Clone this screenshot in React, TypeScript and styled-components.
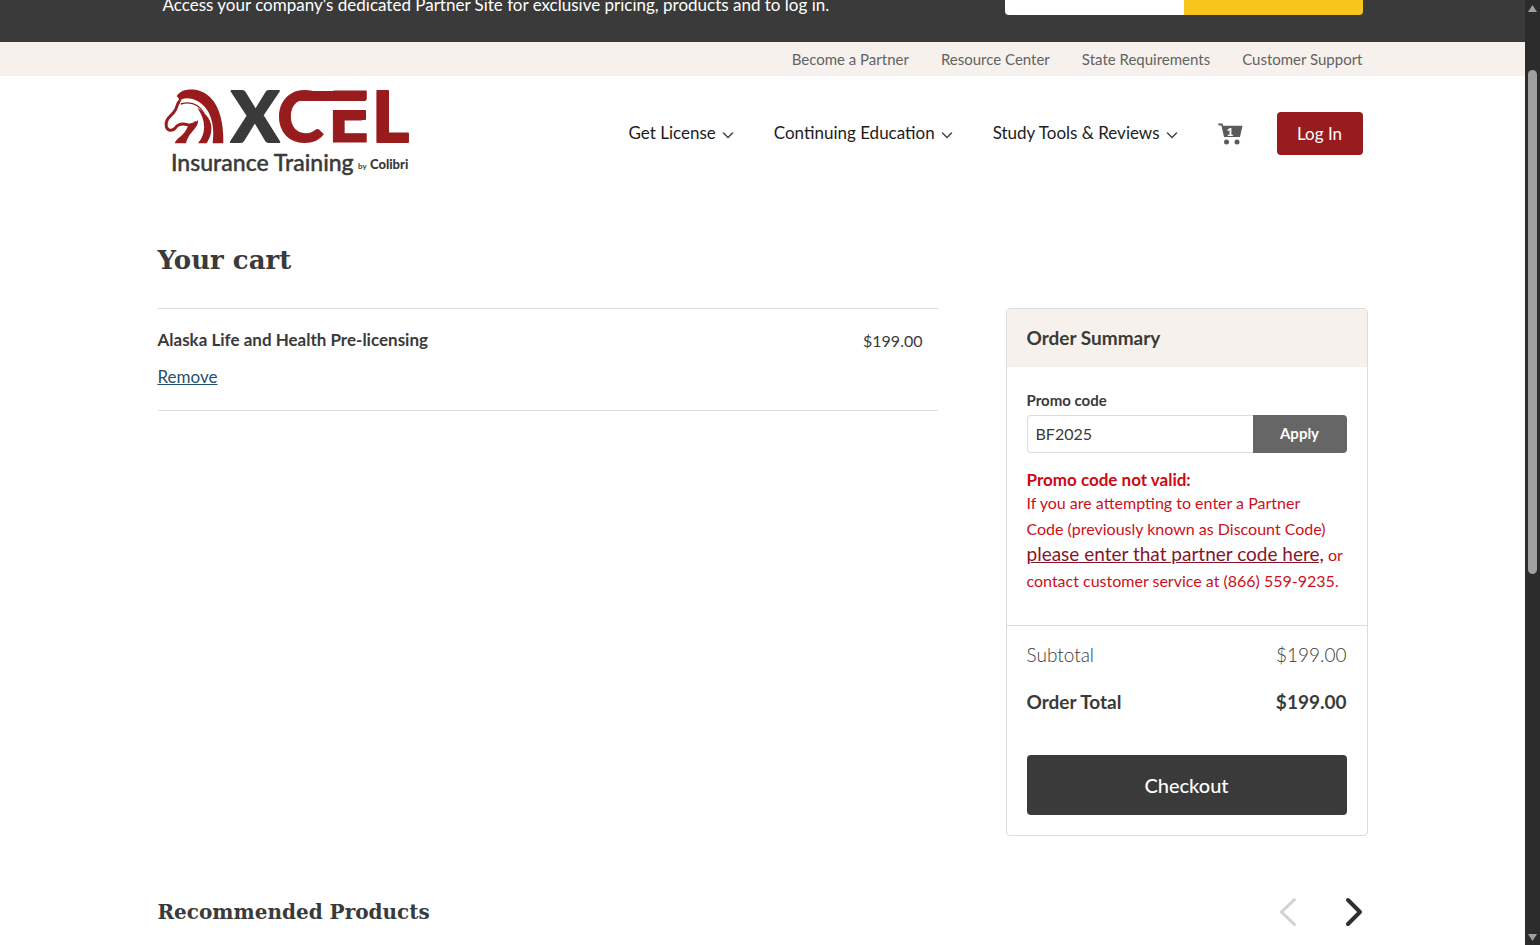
import React from "react";
import styled, { createGlobalStyle } from "styled-components";

const INK = "#3a3a3a";
const RED = "#981b1e";
const SAND = "#f6f1ec";
const LINE = "#dcdcdc";

const GlobalStyle = createGlobalStyle`
  * { box-sizing: border-box; }
  body {
    margin: 0;
    background: #fff;
    color: ${INK};
    font-family: Lato, "Liberation Sans", sans-serif;
    font-size: 16px;
    line-height: 24px;
  }
  h1, h2, h3, p, ul, dl, dd { margin: 0; padding: 0; }
  ul { list-style: none; }
  button, input { font-family: inherit; }
  button { cursor: pointer; border: 0; padding: 0; }
`;

const Shell = styled.div`
  display: flex;
  height: 100vh;
  overflow: hidden;
`;

const Page = styled.div`
  flex: 1;
  min-width: 0;
  overflow: hidden;
`;

const Wrap = styled.div<{ $width: number }>`
  width: 100%;
  max-width: ${(p) => p.$width}px;
  margin: 0 auto;
`;

const Banner = styled.section`
  height: 42px;
  overflow: hidden;
  background: ${INK};
  color: #fff;
`;

const BannerRow = styled(Wrap)`
  display: flex;
  height: 100%;
  justify-content: space-between;
  align-items: flex-end;
`;

const BannerText = styled.p`
  font-size: 17px;
  line-height: 26px;
  padding-bottom: 24px;
`;

const PartnerForm = styled.form`
  display: flex;
  width: 358px;
  padding-bottom: 27px;
`;

const PartnerInput = styled.input`
  flex: 1;
  min-width: 0;
  height: 48px;
  padding: 0;
  border: 0;
  border-radius: 4px 0 0 4px;
  background: #fff;
`;

const PartnerButton = styled.button`
  flex: 1;
  height: 48px;
  border-radius: 0 4px 4px 0;
  background: #f8c51c;
`;

const Utility = styled.nav`
  background: ${SAND};
  ul {
    display: flex;
    justify-content: flex-end;
    gap: 32px;
  }
`;

const UtilityLink = styled.a`
  display: block;
  color: #636363;
  font-size: 15px;
  line-height: 34px;
  text-decoration: none;
`;

const Header = styled.header`
  padding: 12px 0 10px;
`;

const HeaderRow = styled(Wrap)`
  display: flex;
  align-items: center;
  justify-content: space-between;
`;

const LogoLink = styled.a`
  display: block;
  svg {
    display: block;
    overflow: visible;
  }
`;

const MainNav = styled.nav`
  display: flex;
  align-items: center;
`;

const NavButton = styled.button`
  display: flex;
  align-items: center;
  gap: 6px;
  margin-right: 40px;
  background: none;
  color: #1c1c1c;
  font-size: 17px;
  line-height: 24px;
  svg { margin-top: 4px; }
`;

const CartLink = styled.a`
  display: block;
  margin-right: 34px;
  padding-top: 2px;
  svg { display: block; }
`;

const LoginButton = styled.button`
  height: 43px;
  width: 86px;
  border-radius: 4px;
  background: ${RED};
  color: #fff;
  font-size: 17px;
`;

const Title = styled.h1`
  padding: 56px 0 32px;
  font-family: "DejaVu Serif", "Liberation Serif", serif;
  font-size: 26px;
  line-height: 32px;
`;

const Columns = styled.div`
  display: grid;
  grid-template-columns: minmax(0, 1fr) 362px;
  gap: 68px;
  align-items: start;
`;

const CartItem = styled.li`
  display: flex;
  justify-content: space-between;
  padding: 19px 15px 21px 0;
  border-top: 1px solid ${LINE};
  border-bottom: 1px solid ${LINE};
`;

const ItemName = styled.h3`
  font-size: 17px;
  line-height: 24px;
  margin-bottom: 13px;
`;

const Remove = styled.a`
  display: block;
  color: #24506a;
  font-size: 17px;
  line-height: 24px;
  text-decoration: underline;
`;

const Price = styled.span`
  font-size: 16px;
  line-height: 25px;
`;

const Summary = styled.section`
  border: 1px solid ${LINE};
  border-radius: 4px;
`;

const SummaryTitle = styled.h2`
  padding: 17px 20px;
  background: ${SAND};
  font-size: 19px;
  line-height: 24px;
`;

const Promo = styled.form`
  padding: 23px 20px 31px;
  border-bottom: 1px solid ${LINE};
`;

const PromoLabel = styled.label`
  display: block;
  font-size: 15px;
  font-weight: 700;
  line-height: 20px;
`;

const PromoRow = styled.div`
  display: flex;
  margin: 5px 0 17px;
`;

const PromoInput = styled.input`
  flex: 1;
  min-width: 0;
  height: 38px;
  padding: 0 8px 2px;
  border: 1px solid ${LINE};
  border-right: 0;
  border-radius: 4px 0 0 4px;
  color: ${INK};
  font-size: 16px;
`;

const ApplyButton = styled.button`
  width: 94px;
  padding-bottom: 2px;
  border-radius: 0 4px 4px 0;
  background: #666;
  color: #fff;
  font-size: 15px;
  font-weight: 700;
`;

const ErrorTitle = styled.strong`
  display: block;
  color: #cc0a14;
  font-size: 17px;
  line-height: 20px;
`;

const ErrorText = styled.p`
  color: #cc1020;
  font-size: 16px;
  line-height: 26px;
  a {
    color: #86142a;
    font-size: 19px;
    line-height: 24px;
  }
`;

const Totals = styled.dl`
  display: grid;
  gap: 23px;
  padding: 17px 20px 41px;
`;

const TotalLine = styled.div<{ $strong?: boolean }>`
  display: flex;
  justify-content: space-between;
  font-size: 19px;
  line-height: 24px;
  font-weight: ${(p) => (p.$strong ? 700 : 300)};
`;

const Checkout = styled.button`
  display: block;
  width: calc(100% - 40px);
  height: 60px;
  margin: 0 20px 20px;
  border-radius: 4px;
  background: ${INK};
  color: #fff;
  font-size: 20px;
  font-weight: 500;
`;

const Recommended = styled.div`
  display: flex;
  align-items: center;
  justify-content: space-between;
  padding: 60px 5px 0 0;
  h2 {
    font-family: "DejaVu Serif", "Liberation Serif", serif;
    font-size: 20px;
    line-height: 32px;
  }
`;

const Arrows = styled.div`
  display: flex;
  gap: 48px;
`;

const ArrowButton = styled.button`
  background: none;
  svg { display: block; }
`;

const ScrollTrack = styled.div`
  display: flex;
  flex-direction: column;
  align-items: center;
  width: 15px;
  padding: 5px 0 4px;
  background: #2c2c2c;
`;

const ScrollSpace = styled.div<{ $grow: number }>`
  flex: ${(p) => p.$grow} 1 0;
`;

const ScrollThumb = styled.div`
  flex: 503 1 0;
  width: 9px;
  border-radius: 5px;
  background: #9f9f9f;
`;

const Logo = () => (
  <svg width="248" height="90" viewBox="0 0 248 90" role="img" aria-label="XCEL Insurance Training by Colibri">
    <g transform="translate(-3 -4) scale(0.3333)" fill={RED}>
      <path d="M50 37 C62 15 95 13 120 21 C165 36 192 90 190 178 L158 178 C166 120 150 62 100 46 C82 40 68 42 58 50 C56 43 54 39 50 37 Z" />
      <path d="M112 72 C160 100 164 140 140 178 L114 178 C140 148 138 108 112 72 Z" />
      <path d="M114 108 C116 134 88 140 78 178 L44 178 C50 160 74 156 84 126 C96 126 106 118 114 108 Z" />
      <path d="M62 48 C48 60 54 70 42 84 C30 98 14 108 19 128 C24 142 38 142 46 132 C54 120 66 118 82 122 C92 124 102 122 110 114" fill="none" stroke={RED} strokeWidth="9" strokeLinejoin="round" />
      <path d="M60 55 C88 46 118 52 134 84" fill="none" stroke="#fff" strokeWidth="4" />
      <path d="M62 60 C90 52 116 60 132 88" fill="none" stroke={RED} strokeWidth="4" />
    </g>
    <g fontFamily="Lato, sans-serif" fontWeight="900" fontSize="71" fill={RED} stroke={RED} strokeLinejoin="round">
      <text x="68" y="54" fill={INK} stroke={INK} strokeWidth="2">X</text>
      <text x="114" y="54">C</text>
      <text x="165" y="54">E</text>
      <text x="209" y="54" strokeWidth="2">L</text>
    </g>
    <rect x="141" y="12" width="64" height="10" fill="#fff" />
    <rect x="136" y="3" width="67" height="10" rx="1" fill={RED} />
    <rect x="170" y="22" width="33" height="10" rx="1" fill={RED} />
    <g fontFamily="Lato, sans-serif" fill={INK}>
      <text x="8" y="83" fontSize="23" fontWeight="500" stroke={INK} strokeWidth="0.4">Insurance Training</text>
      <text x="195" y="81" fontSize="8" fontWeight="700">by</text>
      <text x="207" y="81" fontSize="13" fontWeight="900">Colibri</text>
    </g>
  </svg>
);

const Chevron = () => (
  <svg width="12" height="8" viewBox="0 0 12 8" fill="none" stroke="#444" strokeWidth="1.5" strokeLinecap="round">
    <path d="M1.500 2 L6 6.500 L10.500 2" />
  </svg>
);

const CartIcon = () => (
  <svg width="25" height="22" viewBox="0 0 25 22">
    <path d="M0 0.500 H4.500 L5.200 2.800 H24.500 L22 14 H6 L3.400 2.500 H0.800 Z" fill="#5b5b5b" />
    <circle cx="8.500" cy="19" r="2.500" fill="#5b5b5b" />
    <circle cx="19" cy="19" r="2.500" fill="#5b5b5b" />
    <text x="12" y="13" textAnchor="middle" fill="#fff" fontFamily="Lato, sans-serif" fontSize="12" fontWeight="900">1</text>
  </svg>
);

const Arrow = ({ back }: { back?: boolean }) => (
  <svg width="18" height="30" viewBox="0 0 18 30" fill="none" stroke={back ? "#d2d2d2" : "#2f2f2f"} strokeWidth={back ? 3 : 4} strokeLinecap="round" strokeLinejoin="round">
    <path d={back ? "M15.500 2.500 L2.500 15 L15.500 27.500" : "M3 3 L15 15 L3 27"} />
  </svg>
);

const utilityLinks = ["Become a Partner", "Resource Center", "State Requirements", "Customer Support"];
const menus = ["Get License", "Continuing Education", "Study Tools & Reviews"];

export default function App() {
  return (
    <Shell>
      <GlobalStyle />
      <Page>
        <Banner>
          <BannerRow $width={1200}>
            <BannerText>Access your company's dedicated Partner Site for exclusive pricing, products and to log in.</BannerText>
            <PartnerForm onSubmit={(e) => e.preventDefault()}>
              <PartnerInput aria-label="Partner code" />
              <PartnerButton type="submit" aria-label="Go to partner site" />
            </PartnerForm>
          </BannerRow>
        </Banner>
        <Utility aria-label="Utility">
          <Wrap as="ul" $width={1200}>
            {utilityLinks.map((t) => (
              <li key={t}><UtilityLink href="#">{t}</UtilityLink></li>
            ))}
          </Wrap>
        </Utility>
        <Header>
          <HeaderRow $width={1200}>
            <LogoLink href="#"><Logo /></LogoLink>
            <MainNav aria-label="Main">
              {menus.map((t) => (
                <NavButton type="button" key={t}>{t}<Chevron /></NavButton>
              ))}
              <CartLink href="#" aria-label="Cart"><CartIcon /></CartLink>
              <LoginButton type="button">Log In</LoginButton>
            </MainNav>
          </HeaderRow>
        </Header>
        <Wrap as="main" $width={1210}>
          <Title>Your cart</Title>
          <Columns>
            <ul>
              <CartItem>
                <div>
                  <ItemName>Alaska Life and Health Pre-licensing</ItemName>
                  <Remove href="#">Remove</Remove>
                </div>
                <Price>$199.00</Price>
              </CartItem>
            </ul>
            <Summary>
              <SummaryTitle>Order Summary</SummaryTitle>
              <Promo onSubmit={(e) => e.preventDefault()}>
                <PromoLabel htmlFor="promo">Promo code</PromoLabel>
                <PromoRow>
                  <PromoInput id="promo" defaultValue="BF2025" />
                  <ApplyButton type="submit">Apply</ApplyButton>
                </PromoRow>
                <ErrorTitle>Promo code not valid:</ErrorTitle>
                <ErrorText>
                  If you are attempting to enter a Partner<br />
                  Code (previously known as Discount Code)<br />
                  <a href="#">please enter that partner code here,</a> or<br />
                  contact customer service at (866) 559-9235.
                </ErrorText>
              </Promo>
              <Totals>
                <TotalLine><dt>Subtotal</dt><dd>$199.00</dd></TotalLine>
                <TotalLine $strong><dt>Order Total</dt><dd>$199.00</dd></TotalLine>
              </Totals>
              <Checkout type="button">Checkout</Checkout>
            </Summary>
          </Columns>
          <Recommended>
            <h2>Recommended Products</h2>
            <Arrows>
              <ArrowButton type="button" aria-label="Previous"><Arrow back /></ArrowButton>
              <ArrowButton type="button" aria-label="Next"><Arrow /></ArrowButton>
            </Arrows>
          </Recommended>
        </Wrap>
      </Page>
      <ScrollTrack aria-hidden="true">
        <svg width="9" height="7" viewBox="0 0 9 7"><path d="M4.500 0 L9 7 H0 Z" fill="#9f9f9f" /></svg>
        <ScrollSpace $grow={58} />
        <ScrollThumb />
        <ScrollSpace $grow={360} />
        <svg width="9" height="7" viewBox="0 0 9 7"><path d="M0 0 H9 L4.500 7 Z" fill="#9f9f9f" /></svg>
      </ScrollTrack>
    </Shell>
  );
}
